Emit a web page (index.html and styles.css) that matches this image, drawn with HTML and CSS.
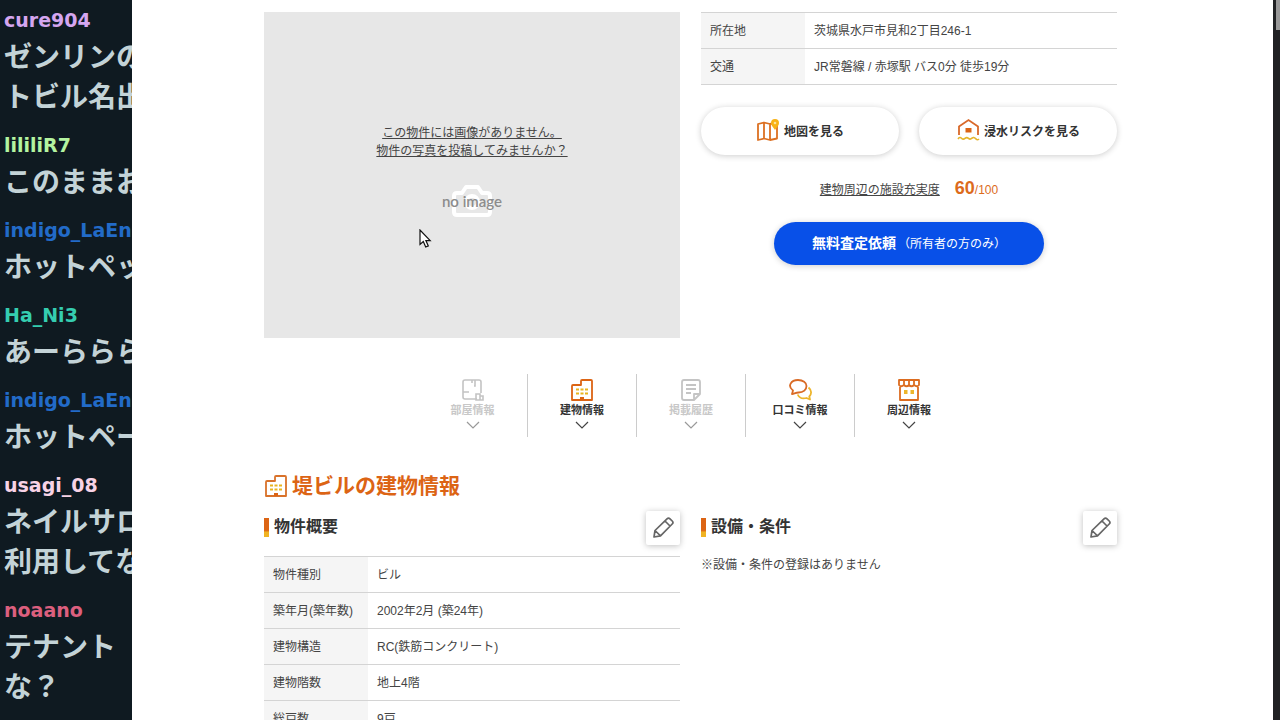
FILE: index.html
```html
<!DOCTYPE html>
<html lang="ja">
<head>
    <meta charset="UTF-8">
    <meta name="viewport" content="width=device-width, initial-scale=1.0">
    <title>堤ビルの建物情報</title>
    <link rel="stylesheet" href="styles.css">
</head>
<body>
    <aside class="chat">
        <div class="chat-item">
            <p class="chat-name purple">cure904</p>
            <p class="chat-text">ゼンリンの<br>トビル名出</p>
        </div>
        <div class="chat-item">
            <p class="chat-name green">lililiR7</p>
            <p class="chat-text">このままお</p>
        </div>
        <div class="chat-item">
            <p class="chat-name blue">indigo_LaEn</p>
            <p class="chat-text">ホットペッ</p>
        </div>
        <div class="chat-item">
            <p class="chat-name teal">Ha_Ni3</p>
            <p class="chat-text">あーららら</p>
        </div>
        <div class="chat-item">
            <p class="chat-name blue">indigo_LaEn</p>
            <p class="chat-text">ホットペー</p>
        </div>
        <div class="chat-item">
            <p class="chat-name pink">usagi_08</p>
            <p class="chat-text">ネイルサロ<br>利用してな</p>
        </div>
        <div class="chat-item">
            <p class="chat-name red">noaano</p>
            <p class="chat-text">テナント<br>な？</p>
        </div>
    </aside>

    <main class="page">
        <div class="columns">
            <div class="photo">
                <a class="photo-link" href="#">この物件には画像がありません。<br>物件の写真を投稿してみませんか？</a>
                <div class="no-image">
                    <svg width="42" height="34" viewBox="0 0 42 34" fill="none" stroke="#fff" stroke-width="4" stroke-linejoin="round">
                        <path d="M3 28V12q0-3 3-3h5l4-6h12l4 6h5q3 0 3 3v16q0 3-3 3H6q-3 0-3-3z"/>
                        <circle cx="21" cy="18" r="6"/>
                    </svg>
                    <span>no image</span>
                </div>
                <svg class="cursor" width="14" height="20" viewBox="0 0 14 20">
                    <path d="M1 1v14.500l3.300-3 2.400 5.500 2.600-1.100-2.400-5.300h4.300z" fill="#fff" stroke="#111" stroke-width="1.200"/>
                </svg>
            </div>

            <div class="summary">
                <table class="info">
                    <tr><th scope="row">所在地</th><td>茨城県水戸市見和2丁目246-1</td></tr>
                    <tr><th scope="row">交通</th><td>JR常磐線 / 赤塚駅 バス0分 徒歩19分</td></tr>
                </table>
                <div class="pills">
                    <button class="pill" type="button">
                        <svg width="24" height="24" viewBox="0 0 24 24" fill="none" stroke="#dc7022" stroke-width="1.800" stroke-linejoin="round">
                            <path d="M2 6l6-1.500L14 6l7-1.500v16L14 22l-6-1.500L2 22zM8 4.500v16M14 6v16"/>
                            <path d="M19 12c-2-3-4-4.500-4-7a4 4 0 0 1 8 0c0 2.500-2 4-4 7z" fill="#f8b215" stroke="none"/>
                            <circle cx="19" cy="5" r="1.300" fill="#fce29a" stroke="none"/>
                        </svg>
                        地図を見る
                    </button>
                    <button class="pill" type="button">
                        <svg width="24" height="24" viewBox="0 0 24 24" fill="none" stroke="#d9692a" stroke-width="1.800">
                            <path d="M3 17V8.500L12.500 2 22 8.500V17"/>
                            <path d="M9.500 10h6v4.500h-6z" fill="#dc6416" stroke="none"/>
                            <path d="M2 21q1.800-2.500 3.500-.8t3.500.2 3.500 0 3.500-.2 3.500.4 3.500.4" stroke="#e5b52c" stroke-width="1.600"/>
                        </svg>
                        浸水リスクを見る
                    </button>
                </div>
                <p class="score"><a href="#">建物周辺の施設充実度</a><span><strong>60</strong>/100</span></p>
                <button class="assess" type="button"><b>無料査定依頼</b>（所有者の方のみ）</button>
            </div>
        </div>

        <nav class="tabs">
            <a class="tab off" href="#">
                <svg width="24" height="24" viewBox="0 0 24 24" fill="none" stroke="#c4c4c4" stroke-width="1.600">
                    <path d="M16 21H4q-2 0-2-2V4q0-2 2-2h14q2 0 2 2v11M11 2v3M14 2v6h-1M2 14h6M15 16h4v6h-4zM19 18h3v4h-7"/>
                </svg>
                <span>部屋情報</span>
                <svg class="arrow" width="14" height="8" viewBox="0 0 14 8"><path d="M1 1l6 6 6-6"/></svg>
            </a>
            <a class="tab" href="#">
                <svg width="24" height="24" viewBox="0 0 24 24" fill="none" stroke="#dc6414" stroke-width="1.800" stroke-linejoin="round">
                    <path d="M2 22V8q0-1 1-1h8V3q0-1 1-1h9q1 0 1 1v19z"/>
                    <path d="M6 11.500h12.500M6 15.500h12.500" stroke="#e9b51f" stroke-width="2" stroke-dasharray="3 1.500"/>
                    <path d="M10 19h4v3h-4z" fill="#dc6414" stroke="none"/>
                </svg>
                <span>建物情報</span>
                <svg class="arrow" width="14" height="8" viewBox="0 0 14 8"><path d="M1 1l6 6 6-6"/></svg>
            </a>
            <a class="tab off" href="#">
                <svg width="24" height="24" viewBox="0 0 24 24" fill="none" stroke="#c4c4c4" stroke-width="1.800" stroke-linejoin="round">
                    <path d="M15 22H5q-2 0-2-2V4q0-2 2-2h14q2 0 2 2v12zM15 22v-6h6M7 7h10M7 11h10M7 15h5"/>
                </svg>
                <span>掲載履歴</span>
                <svg class="arrow" width="14" height="8" viewBox="0 0 14 8"><path d="M1 1l6 6 6-6"/></svg>
            </a>
            <a class="tab" href="#">
                <svg width="24" height="24" viewBox="0 0 24 24" fill="none" stroke-width="1.800" stroke-linejoin="round">
                    <path d="M20.500 9.500c3 2.500 3.500 6.500.8 9l.7 3-3.500-1.500c-4 1-7.500-.5-8.800-3.500" stroke="#edb52b"/>
                    <path d="M4 16l1-3.500C-1 8 3 2 10 2c5 0 8.500 2.500 8.500 6s-3 6.500-8 6.500c-2.500 0-4 1-6.500 1.500z" stroke="#d96a25"/>
                </svg>
                <span>口コミ情報</span>
                <svg class="arrow" width="14" height="8" viewBox="0 0 14 8"><path d="M1 1l6 6 6-6"/></svg>
            </a>
            <a class="tab" href="#">
                <svg width="24" height="24" viewBox="0 0 24 24" fill="none" stroke="#dc6c20" stroke-width="1.800" stroke-linejoin="round">
                    <path d="M3 9v13h18V9M2 2h20v5q-2 2.500-5 0-2.500 2.500-5 0-2.500 2.500-5 0-3 2.500-5 0zM7 2v5M12 2v5M17 2v5"/>
                    <path d="M7 12h3.500v4H7zM13.500 12H17v4h-3.500z" fill="#edb52b" stroke="none"/>
                </svg>
                <span>周辺情報</span>
                <svg class="arrow" width="14" height="8" viewBox="0 0 14 8"><path d="M1 1l6 6 6-6"/></svg>
            </a>
        </nav>

        <h2 class="title">
            <svg width="24" height="24" viewBox="0 0 24 24" fill="none" stroke="#d9722a" stroke-width="1.800" stroke-linejoin="round">
                <path d="M2 22V8q0-1 1-1h8V3q0-1 1-1h9q1 0 1 1v19z"/>
                <path d="M6 11.500h12.500M6 15.500h12.500" stroke="#e9b51f" stroke-width="2" stroke-dasharray="3 1.500"/>
                <path d="M10 19h4v3h-4z" fill="#dc6414" stroke="none"/>
            </svg>
            堤ビルの建物情報
        </h2>

        <div class="columns">
            <section>
                <div class="section-head">
                    <h3>物件概要</h3>
                    <button class="edit" type="button" aria-label="編集">
                        <svg width="24" height="24" viewBox="0 0 24 24" fill="none" stroke="#666" stroke-width="1.700" stroke-linejoin="round">
                            <path d="M3 21l1-6.500L16 2.800q1.500-1.500 3 0l2.200 2.200q1.500 1.500 0 3L9.500 19.800zM14 5l5 5M4 14.500l5.500 5.300"/>
                        </svg>
                    </button>
                </div>
                <table class="info">
                    <tr><th scope="row">物件種別</th><td>ビル</td></tr>
                    <tr><th scope="row">築年月(築年数)</th><td>2002年2月 (築24年)</td></tr>
                    <tr><th scope="row">建物構造</th><td>RC(鉄筋コンクリート)</td></tr>
                    <tr><th scope="row">建物階数</th><td>地上4階</td></tr>
                    <tr><th scope="row">総戸数</th><td>9戸</td></tr>
                </table>
            </section>
            <section>
                <div class="section-head">
                    <h3>設備・条件</h3>
                    <button class="edit" type="button" aria-label="編集">
                        <svg width="24" height="24" viewBox="0 0 24 24" fill="none" stroke="#666" stroke-width="1.700" stroke-linejoin="round">
                            <path d="M3 21l1-6.500L16 2.800q1.500-1.500 3 0l2.200 2.200q1.500 1.500 0 3L9.500 19.800zM14 5l5 5M4 14.500l5.500 5.300"/>
                        </svg>
                    </button>
                </div>
                <p class="note">※設備・条件の登録はありません</p>
            </section>
        </div>
    </main>

    <div class="scrollbar"><div class="thumb"></div></div>
</body>
</html>
```
FILE: styles.css
```css
* {
    box-sizing: border-box;
}
body {
    margin: 0;
    height: 100vh;
    overflow: hidden;
    display: grid;
    grid-template-columns: 132px 1fr 7px;
    grid-template-rows: 100vh;
    font-family: "Liberation Sans", "Noto Sans CJK JP", sans-serif;
    font-size: 12px;
    line-height: 18px;
    color: #444;
    background: #fff;
}
p, h2, h3 {
    margin: 0;
}
a {
    color: inherit;
}
button {
    border: none;
    font-family: inherit;
    font-size: 12px;
    cursor: pointer;
}

/* chat */
.chat {
    padding: 5px 0 0 4px;
    background: #0f1a21;
    overflow: hidden;
    white-space: nowrap;
}
.chat-item {
    margin-bottom: 15px;
}
.chat-name {
    font: bold 19px/30px "DejaVu Sans", sans-serif;
}
.chat-text {
    font: bold 28px/40px "Noto Sans CJK JP", sans-serif;
    color: #c3d3d7;
}
.purple { color: #d5a6f0; }
.green { color: #b4f4a0; }
.blue { color: #226bc8; }
.teal { color: #35cdb0; }
.pink { color: #f8d3e6; }
.red { color: #dc5f7e; }

/* page */
.page {
    padding: 12px 156px 0 132px;
    overflow: hidden;
}
.columns {
    display: grid;
    grid-template-columns: 1fr 1fr;
    gap: 21px;
}
.photo {
    position: relative;
    height: 326px;
    padding-top: 112px;
    background: #e7e7e7;
    text-align: center;
}
.photo-link {
    display: block;
}
.no-image {
    display: grid;
    place-items: center;
    margin-top: 24px;
    font: 600 15px/18px Lato, sans-serif;
    color: #8c8c8c;
}
.no-image svg,
.no-image span {
    grid-area: 1 / 1;
}
.cursor {
    position: absolute;
    left: 155px;
    top: 217px;
}
.info {
    width: 100%;
    table-layout: fixed;
    border-collapse: collapse;
    border-top: 1px solid #d4d4d4;
}
.info th,
.info td {
    height: 36px;
    padding: 0 9px;
    border-bottom: 1px solid #d4d4d4;
    text-align: left;
    font-weight: normal;
    white-space: nowrap;
}
.info th {
    width: 104px;
    background: #f5f5f5;
}
.pills {
    display: grid;
    grid-template-columns: 1fr 1fr;
    gap: 20px;
    margin-top: 22px;
}
.pill {
    display: flex;
    align-items: center;
    justify-content: center;
    gap: 4px;
    height: 48px;
    padding: 0 6px 2px;
    border-radius: 24px;
    background: #fff;
    box-shadow: 0 1px 6px rgba(0,0,0,0.2);
    font-weight: bold;
    color: #333;
}
.score {
    display: flex;
    justify-content: center;
    align-items: baseline;
    gap: 15px;
    margin-top: 24px;
}
.score span {
    color: #dc6b1c;
}
.score strong {
    font-size: 18px;
}
.assess {
    display: block;
    width: 270px;
    height: 43px;
    margin: 23px auto 0;
    padding: 0 6px 4px;
    border-radius: 22px;
    background: #0850e8;
    box-shadow: 0 1px 6px rgba(0,0,0,0.2);
    color: #fff;
}
.assess b {
    margin-right: 2px;
    font-size: 14px;
}

/* tabs */
.tabs {
    display: flex;
    justify-content: center;
    margin-top: 36px;
}
.tab {
    display: flex;
    flex-direction: column;
    align-items: center;
    width: 109px;
    height: 63px;
    padding-top: 4px;
    font-size: 11px;
    line-height: 16px;
    font-weight: bold;
    color: #333;
    text-decoration: none;
}
.tab + .tab {
    border-left: 1px solid #ccc;
}
.off {
    color: #c8c8c8;
}
.arrow {
    margin-top: 3px;
    fill: none;
    stroke: #444;
    stroke-width: 1.2;
}
.off .arrow {
    stroke: #999;
}

/* building info */
.title {
    display: flex;
    align-items: center;
    gap: 4px;
    margin-top: 32px;
    font-size: 21px;
    line-height: 34px;
    color: #dc6414;
}
.section-head {
    display: flex;
    justify-content: space-between;
    margin-top: 8px;
}
.section-head h3 {
    display: flex;
    align-items: center;
    gap: 5px;
    height: 32px;
    font-size: 16px;
    line-height: 24px;
    color: #333;
}
.section-head h3::before {
    content: "";
    width: 5px;
    height: 19px;
    background: linear-gradient(#dc6414 65%, #f0b323 75%);
}
.edit {
    display: grid;
    place-items: center;
    width: 34px;
    height: 34px;
    padding: 0;
    border-radius: 2px;
    background: #fff;
    box-shadow: 0 1px 6px rgba(0,0,0,0.25);
}
section .info,
.note {
    margin-top: 11px;
}

.scrollbar {
    padding-left: 3px;
    background: #202123;
}
.thumb {
    height: 30px;
    background: #999;
}
```
